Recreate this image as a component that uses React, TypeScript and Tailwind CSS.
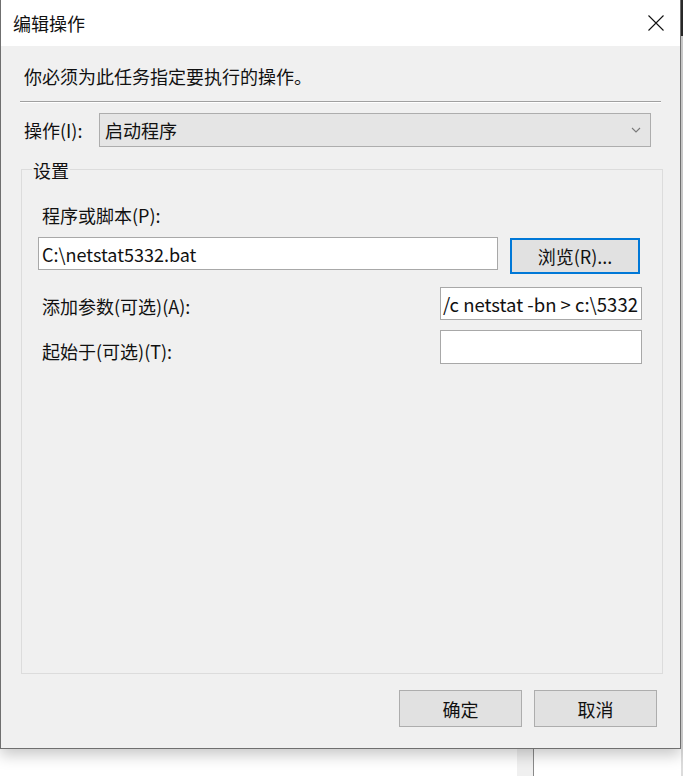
import React from 'react';

const font = "font-['Noto_Sans_CJK_SC','Noto_Sans',sans-serif]";

function CloseIcon() {
  return (
    <svg width="16" height="16" viewBox="0 0 16 16" fill="none">
      <path d="M0.5 0.5 L15.5 15.5 M15.5 0.5 L0.5 15.5" stroke="#111" strokeWidth="1.1" />
    </svg>
  );
}

function Chevron() {
  return (
    <svg width="10" height="6" viewBox="0 0 10 6" fill="none">
      <path d="M1 1 L5 5 L9 1" stroke="#7a7a7a" strokeWidth="1.1" />
    </svg>
  );
}

export default function App() {
  return (
    <div className={`w-[683px] h-[776px] bg-white overflow-hidden flex ${font} text-[18px] text-[#111]`}>
      <div className="w-[681px] flex flex-col">
        {/* dialog */}
        <div className="relative z-10 w-[681px] h-[749px] border border-t-0 border-[#6f6f6f] shadow-[0_6px_14px_rgba(0,0,0,0.22)] flex flex-col">
          <div className="h-[46px] bg-white flex items-center justify-between pl-[12px] pr-[16px]">
            <span className="leading-[24px]">编辑操作</span>
            <CloseIcon />
          </div>

          <div className="flex-1 bg-[#f0f0f0]">
            <p className="mt-[18px] pl-[23px] leading-[24px]">你必须为此任务指定要执行的操作。</p>
            <div className="mt-[13px] ml-[19px] w-[641px] h-[2px] border-t border-[#a0a0a0] border-b border-b-white" />

            <div className="mt-[10px] ml-[23px] flex items-center h-[34px]">
              <span className="w-[75px] leading-[24px]">操作(I):</span>
              <div className="w-[552px] h-[34px] bg-[#e5e5e5] border border-[#adadad] flex items-center justify-between pl-[5px] pr-[9px]">
                <span className="leading-[24px]">启动程序</span>
                <Chevron />
              </div>
            </div>

            {/* group box */}
            <div className="relative mt-[22px] ml-[20px] w-[642px] h-[505px] border border-[#dcdcdc]">
              <span className="absolute -top-[12px] left-[10px] px-[1px] bg-[#f0f0f0] leading-[24px]">设置</span>

              <p className="mt-[33px] pl-[20px] leading-[24px]">程序或脚本(P):</p>

              <div className="mt-[10px] ml-[16px] flex items-start h-[37px]">
                <div className="w-[460px] h-[33px] bg-white border border-[#a8a8a8] flex items-center pl-[3px]">
                  <span className="leading-[24px]">C:\netstat5332.bat</span>
                </div>
                <button className="ml-[12px] mt-[1px] w-[130px] h-[36px] bg-[#e1e1e1] border-2 border-[#0078d7] flex items-center justify-center leading-[24px]">
                  浏览(R)...
                </button>
              </div>

              <div className="mt-[13px] flex items-center h-[33px]">
                <span className="pl-[20px] w-[418px] leading-[24px] mt-[4px]">添加参数(可选)(A):</span>
                <div className="w-[202px] h-[33px] bg-white border border-[#a8a8a8] flex items-center pl-[2px] overflow-hidden whitespace-nowrap">
                  <span className="leading-[24px] text-[18.5px]">/c netstat -bn &gt; c:\5332</span>
                </div>
              </div>

              <div className="mt-[10px] flex items-center h-[34px]">
                <span className="pl-[20px] w-[418px] leading-[24px] mt-[8px]">起始于(可选)(T):</span>
                <div className="w-[202px] h-[34px] bg-white border border-[#a8a8a8]" />
              </div>
            </div>

            <div className="mt-[16px] pr-[23px] flex justify-end gap-[12px]">
              <button className="w-[123px] h-[37px] bg-[#e1e1e1] border border-[#adadad] flex items-center justify-center leading-[24px]">
                确定
              </button>
              <button className="w-[123px] h-[37px] bg-[#e1e1e1] border border-[#adadad] flex items-center justify-center leading-[24px]">
                取消
              </button>
            </div>
          </div>
        </div>

        {/* window behind the dialog */}
        <div className="flex-1 flex">
          <div className="ml-[517px] w-[17px] bg-[#f0f0f0] border-r border-[#8a8a8a]" />
        </div>
      </div>

      <div className="w-[2px] flex flex-col">
        <div className="h-[36px] bg-[#2b2b2b]" />
        <div className="flex-1 bg-[#dcdcdc]" />
      </div>
    </div>
  );
}
